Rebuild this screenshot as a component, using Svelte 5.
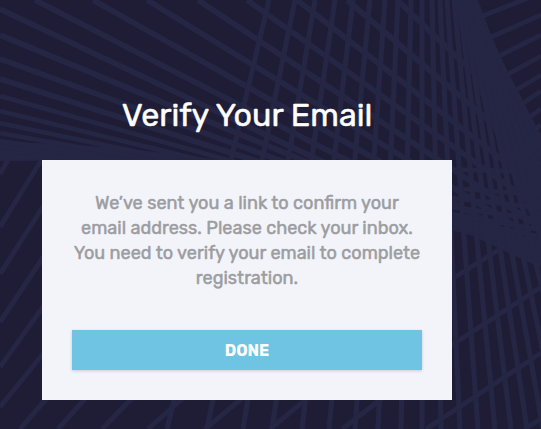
<script>
  // Each strand is [x1, y1, x2, y2, width].
  const sweep = [
    [397, 0, 541, 137], [347, 0, 541, 165], [297, 0, 541, 190], [247, 0, 541, 209],
    [198, 0, 541, 228], [147, 0, 541, 242], [93, 0, 541, 252], [35, 0, 541, 260],
    [0, 9, 541, 265], [0, 35, 541, 259], [0, 59, 541, 255], [0, 79, 541, 252],
    [0, 96, 541, 248], [0, 111, 541, 243], [0, 123, 541, 237], [0, 133, 541, 230],
    [0, 141, 541, 220], [0, 147, 541, 208], [0, 152, 541, 195], [0, 156, 541, 172]
  ].map((l, i) => [...l, i < 12 ? 5.8 : 4.8]);

  const columns = [
    [269, 167], [295, 207], [315, 243], [335, 272], [353, 302], [370, 329],
    [385, 355], [398, 378], [411, 401], [422, 422], [432, 441], [440, 460],
    [447, 478], [454, 495], [459, 511], [463, 527], [467, 543], [470, 559],
    [472, 576], [474, 594], [475, 614], [475, 636], [473, 662], [468, 690]
  ].map(([top, bottom]) => [top, 0, bottom, 429, 5.2]);

  const corner = [
    [480, 17, 541, -7], [489, 38, 541, 15], [497, 57, 541, 35], [505, 76, 541, 56],
    [513, 92, 541, 75], [519, 106, 541, 91], [527, 119, 541, 109], [533, 131, 541, 125]
  ].map((l) => [...l, 4.8]);

  const rays = [
    [0, 174, 8, 160], [0, 227, 42, 159], [0, 274, 60, 180], [0, 322, 60, 232],
    [0, 367, 60, 283], [0, 407, 60, 333], [20, 429, 60, 383], [58, 429, 92, 391],
    [102, 429, 140, 390], [148, 429, 192, 390], [205, 429, 252, 390],
    [270, 429, 455, 277], [455, 277, 505, 246], [342, 429, 455, 343],
    [455, 343, 541, 287], [426, 429, 541, 353], [524, 429, 541, 419]
  ].map((l) => [...l, 5]);

  const strands = [...sweep, ...columns, ...corner, ...rays];
</script>

<main>
  <svg class="backdrop" viewBox="0 0 541 429" aria-hidden="true">
    <path d="M0 142Q100 143 220 160L0 161Z" />
    <path d="M452 0H478Q500 60 517 97Q527 121 541 143V238Q480 115 452 0Z" />
    <path d="M452 213Q500 230 541 244V262Q500 243 452 230Z" />
    {#each strands as [x1, y1, x2, y2, w]}
      <line {x1} {y1} {x2} {y2} stroke-width={w} />
    {/each}
  </svg>

  <section class="panel">
    <h1>Verify Your Email</h1>
    <div class="card">
      <p>
        <span>We’ve sent you a link to confirm your</span>
        <span>email address. Please check your inbox.</span>
        <span>You need to verify your email to complete</span>
        <span>registration.</span>
      </p>
      <button type="button">DONE</button>
    </div>
  </section>
</main>

<style>
  :global(body) { margin: 0; }
  main {
    position: relative;
    height: 429px;
    overflow: hidden;
    background: #1f1c36;
    font-family: Rubik, Roboto, sans-serif;
  }
  .backdrop {
    position: absolute;
    inset: 0;
    width: 541px;
    height: 429px;
    fill: #242644;
    stroke: #242644;
  }
  .backdrop path { stroke: none; }
  .panel {
    position: relative;
    width: 410px;
    margin-left: 42px;
    padding-top: 95px;
  }
  h1 {
    margin: 0 0 25px;
    color: #fff;
    font-size: 32.2px;
    font-weight: 400;
    line-height: 40px;
    -webkit-text-stroke: 0.5px #fff;
    text-align: center;
    white-space: nowrap;
  }
  .card {
    box-sizing: border-box;
    height: 240px;
    padding: 31px 30px 30px;
    background: #f3f4fa;
  }
  p {
    margin: 0 0 39px;
    color: #9c9da1;
    font-size: 18.1px;
    font-weight: 400;
    line-height: 25px;
    -webkit-text-stroke: 0.5px #9c9da1;
    text-align: center;
  }
  p span { display: block; white-space: nowrap; }
  button {
    display: block;
    width: 100%;
    height: 40px;
    padding: 1px 0 0;
    border: 0;
    background: #6fc3e3;
    box-shadow: 0 1px 3px rgba(0, 0, 0, 0.17);
    color: #fff;
    font: 700 16px/39px Rubik, Roboto, sans-serif;
  }
</style>
